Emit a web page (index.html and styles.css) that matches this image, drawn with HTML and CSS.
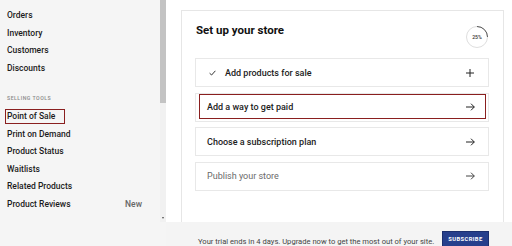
FILE: index.html
```html
<!DOCTYPE html>
<html lang="en">
<head>
    <meta charset="UTF-8">
    <meta name="viewport" content="width=device-width, initial-scale=1.0">
    <title>Commerce - Set up your store</title>
    <link rel="stylesheet" href="styles.css">
</head>
<body>
    <div class="app">
        <div class="sidebar">
            <div class="nav">
                <div class="nav-item">Orders</div>
                <div class="nav-item">Inventory</div>
                <div class="nav-item">Customers</div>
                <div class="nav-item">Discounts</div>

                <div class="nav-heading">SELLING TOOLS</div>
                <div class="nav-item"><span class="marked">Point of Sale</span></div>
                <div class="nav-item">Print on Demand</div>
                <div class="nav-item">Product Status</div>
                <div class="nav-item">Waitlists</div>
                <div class="nav-item">Related Products</div>
                <div class="nav-item">Product Reviews <span class="nav-tag">New</span></div>
            </div>
            <div class="scrollbar">
                <div class="scroll-thumb"></div>
                <div class="scroll-arrow"></div>
            </div>
        </div>

        <div class="main">
            <div class="content">
                <div class="card">
                    <div class="card-header">
                        <h2>Set up your store</h2>
                        <div class="progress">
                            <svg width="22" height="22" viewBox="0 0 22 22">
                                <circle cx="11" cy="11" r="10.5" fill="none" stroke="#dedede" stroke-width="1"/>
                                <path d="M11 0.5 A10.5 10.5 0 0 1 21.5 11" fill="none" stroke="#555" stroke-width="1"/>
                            </svg>
                            <span>25%</span>
                        </div>
                    </div>

                    <div class="step done">
                        <svg class="check" width="7" height="6" viewBox="0 0 7 6">
                            <path d="M0.6 3.2 L2.6 5 L6.4 0.8" fill="none" stroke="#333" stroke-width="1"/>
                        </svg>
                        <span class="step-label">Add products for sale</span>
                        <svg class="step-icon" width="8" height="8" viewBox="0 0 8 8">
                            <path d="M4 0 V8 M0 4 H8" fill="none" stroke="#222" stroke-width="1"/>
                        </svg>
                    </div>

                    <div class="step">
                        <span class="step-label">Add a way to get paid</span>
                        <svg class="step-icon" width="9" height="8" viewBox="0 0 9 8">
                            <path d="M0 4 H8.3 M5 0.7 L8.3 4 L5 7.3" fill="none" stroke="#222" stroke-width="1"/>
                        </svg>
                        <div class="mark"></div>
                    </div>

                    <div class="step">
                        <span class="step-label">Choose a subscription plan</span>
                        <svg class="step-icon" width="9" height="8" viewBox="0 0 9 8">
                            <path d="M0 4 H8.3 M5 0.7 L8.3 4 L5 7.3" fill="none" stroke="#222" stroke-width="1"/>
                        </svg>
                    </div>

                    <div class="step muted">
                        <span class="step-label">Publish your store</span>
                        <svg class="step-icon" width="9" height="8" viewBox="0 0 9 8">
                            <path d="M0 4 H8.3 M5 0.7 L8.3 4 L5 7.3" fill="none" stroke="#444" stroke-width="1"/>
                        </svg>
                    </div>
                </div>
            </div>

            <div class="trial-bar">
                <span class="trial-text">Your trial ends in 4 days. Upgrade now to get the most out of your site.</span>
                <button class="subscribe">SUBSCRIBE</button>
            </div>
        </div>
    </div>
</body>
</html>
```

FILE: styles.css
```css
body {
    margin: 0;
    font-family: Roboto, "Liberation Sans", Arial, sans-serif;
    color: #1c1c1c;
    background: #fff;
}
.app {
    display: flex;
    width: 512px;
    height: 246px;
    overflow: hidden;
}
.sidebar {
    display: flex;
    width: 166px;
    flex-shrink: 0;
    background: #f5f5f5;
}
.nav {
    flex: 1;
    padding: 7px 18px 0 7px;
}
.nav-item {
    display: flex;
    justify-content: space-between;
    align-items: center;
    height: 17.5px;
    font-size: 8.5px;
    font-weight: 500;
    line-height: 17.5px;
    white-space: nowrap;
}
.nav-tag {
    color: #666;
}
.nav-heading {
    margin: 17px 0 6.2px;
    font-size: 5.2px;
    line-height: 8px;
    letter-spacing: 0.5px;
    color: #8a8a8a;
    font-weight: 500;
}
.marked {
    display: inline-block;
    line-height: 11px;
    padding-right: 8px;
    outline: 1.6px solid #8a1f1f;
    outline-offset: 1px;
}
.scrollbar {
    display: flex;
    flex-direction: column;
    justify-content: space-between;
    width: 6px;
    height: 222px;
    background: #f1f1f1;
}
.scroll-thumb {
    height: 103px;
    background: #c3c3c3;
}
.scroll-arrow {
    width: 0;
    height: 0;
    margin: 0 0 3px 1.5px;
    border-left: 1.5px solid transparent;
    border-right: 1.5px solid transparent;
    border-top: 2px solid #505050;
}
.main {
    flex: 1;
    display: flex;
    flex-direction: column;
    min-width: 0;
}
.content {
    flex: 1;
    overflow: hidden;
    padding: 10px 8px 0 15px;
}
.card {
    border: 1px solid #e6e6e6;
    padding: 12px 14px 0 13px;
    height: 260px;
}
.card-header {
    display: flex;
    justify-content: space-between;
    align-items: flex-start;
    margin-bottom: 10px;
}
.card-header h2 {
    margin: 0 0 0 1px;
    font-size: 11.5px;
    line-height: 14px;
    font-weight: 700;
    color: #111;
}
.progress {
    position: relative;
    width: 22px;
    height: 22px;
    margin: 3px 1px 0 0;
}
.progress svg {
    display: block;
}
.progress span {
    position: absolute;
    top: 0;
    left: 0;
    width: 22px;
    line-height: 22px;
    text-align: center;
    font-size: 5.2px;
    font-weight: 500;
    color: #333;
}
.step {
    position: relative;
    display: flex;
    align-items: center;
    height: 29px;
    box-sizing: border-box;
    border: 1px solid #e8e8e8;
    padding: 0 13px 0 11px;
    margin-bottom: 5.5px;
}
.step-label {
    flex: 1;
    font-size: 9px;
    font-weight: 500;
    white-space: nowrap;
}
.step.done {
    padding-left: 13px;
}
.step.done .step-icon {
    margin-right: 1px;
}
.step .check {
    margin-right: 9px;
}
.step.muted .step-label {
    color: #6a6a6a;
    font-weight: 400;
}
.mark {
    position: absolute;
    top: 0.5px;
    right: 2px;
    bottom: 1.5px;
    left: 3px;
    border: 1.6px solid #8a1f1f;
}
.trial-bar {
    display: flex;
    align-items: flex-start;
    gap: 8px;
    height: 24px;
    box-sizing: border-box;
    padding: 9px 0 0 32px;
    background: #f4f4f4;
}
.trial-text {
    margin-top: 3px;
    font-size: 7.6px;
    line-height: 15px;
    color: #444;
    white-space: nowrap;
}
.subscribe {
    height: 16px;
    padding: 0 5px;
    border: 1px solid #1b2f6e;
    background: #263f8c;
    color: #fff;
    font-family: inherit;
    font-size: 5.8px;
    font-weight: 700;
    letter-spacing: 0.4px;
    line-height: 14px;
}
```
